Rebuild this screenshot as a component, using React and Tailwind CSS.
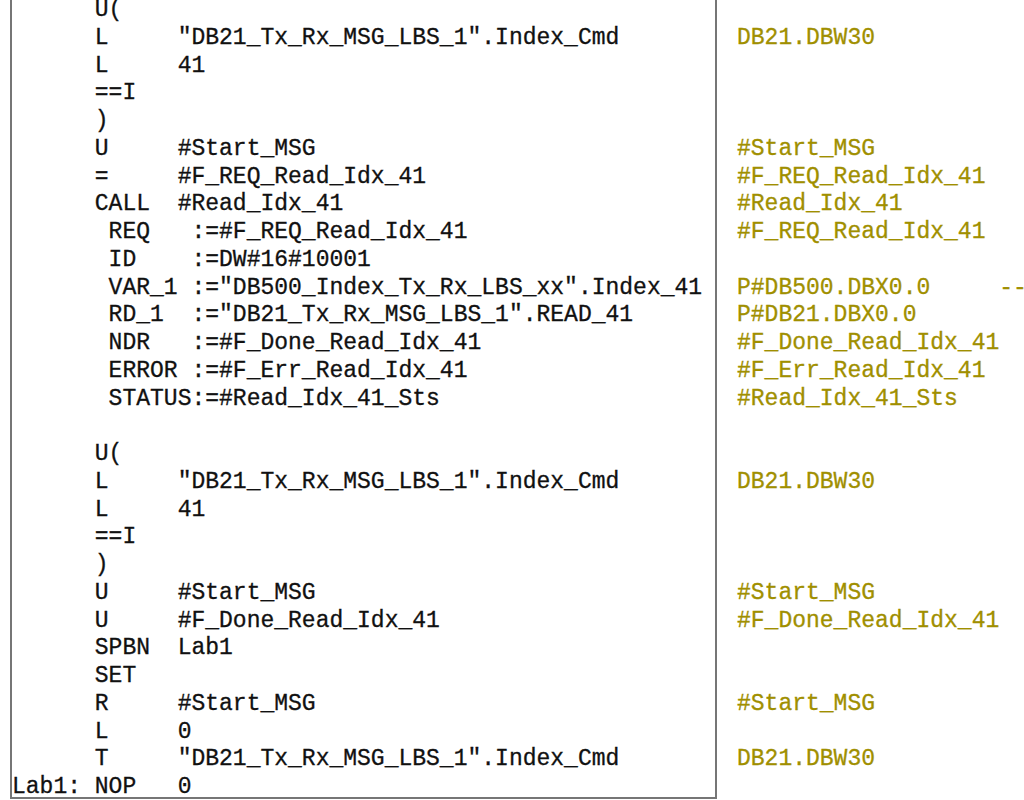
import React from 'react';

const rows = [
  ['', 'U(', '', ''],
  ['', 'L', '"DB21_Tx_Rx_MSG_LBS_1".Index_Cmd', 'DB21.DBW30'],
  ['', 'L', '41', ''],
  ['', '==I', '', ''],
  ['', ')', '', ''],
  ['', 'U', '#Start_MSG', '#Start_MSG'],
  ['', '=', '#F_REQ_Read_Idx_41', '#F_REQ_Read_Idx_41'],
  ['', 'CALL', '#Read_Idx_41', '#Read_Idx_41'],
  ['', ' REQ   :=#F_REQ_Read_Idx_41', null, '#F_REQ_Read_Idx_41'],
  ['', ' ID    :=DW#16#10001', null, ''],
  ['', ' VAR_1 :="DB500_Index_Tx_Rx_LBS_xx".Index_41', null, 'P#DB500.DBX0.0     --'],
  ['', ' RD_1  :="DB21_Tx_Rx_MSG_LBS_1".READ_41', null, 'P#DB21.DBX0.0'],
  ['', ' NDR   :=#F_Done_Read_Idx_41', null, '#F_Done_Read_Idx_41'],
  ['', ' ERROR :=#F_Err_Read_Idx_41', null, '#F_Err_Read_Idx_41'],
  ['', ' STATUS:=#Read_Idx_41_Sts', null, '#Read_Idx_41_Sts'],
  ['', '', '', ''],
  ['', 'U(', '', ''],
  ['', 'L', '"DB21_Tx_Rx_MSG_LBS_1".Index_Cmd', 'DB21.DBW30'],
  ['', 'L', '41', ''],
  ['', '==I', '', ''],
  ['', ')', '', ''],
  ['', 'U', '#Start_MSG', '#Start_MSG'],
  ['', 'U', '#F_Done_Read_Idx_41', '#F_Done_Read_Idx_41'],
  ['', 'SPBN', 'Lab1', ''],
  ['', 'SET', '', ''],
  ['', 'R', '#Start_MSG', '#Start_MSG'],
  ['', 'L', '0', ''],
  ['', 'T', '"DB21_Tx_Rx_MSG_LBS_1".Index_Cmd', 'DB21.DBW30'],
  ['Lab1:', 'NOP', '0', ''],
];

const pad = (s, n) => s + ' '.repeat(Math.max(0, n - s.length));

const lineText = ([label, instr, operand]) => {
  if (!operand) return pad(label, 6) + instr;
  return pad(label, 6) + pad(instr, 6) + operand;
};

export default function App() {
  const last = rows.length - 1;
  return (
    <div className="w-[1024px] h-[800px] overflow-hidden bg-white">
      <div className="flex items-start -mt-[3px] font-['Liberation_Mono','Courier_New',monospace] text-[23px] leading-[27.75px] [-webkit-text-stroke:0.3px]">
        <div className="ml-[10px] w-[707px] shrink-0 border-l-2 border-r-2 border-b-2 border-[#767676] text-[#111]">
          {rows.map((r, i) => (
            <div key={i} className={i === last ? 'whitespace-pre h-[22.5px]' : 'whitespace-pre h-[27.75px]'}>
              {lineText(r)}
            </div>
          ))}
        </div>
        <div className="flex-1 pl-[20px] text-[#a08f00] whitespace-pre">
          {rows.map((r, i) => (
            <div key={i} className="h-[27.75px]">
              {r[3]}
            </div>
          ))}
        </div>
      </div>
    </div>
  );
}
